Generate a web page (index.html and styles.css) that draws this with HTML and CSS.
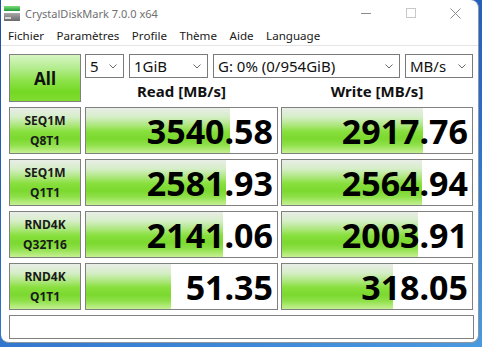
FILE: index.html
```html
<!DOCTYPE html>
<html lang="fr">
<head>
<meta charset="utf-8">
<title>CrystalDiskMark 7.0.0 x64</title>
<link rel="stylesheet" href="styles.css">
</head>
<body>
<div class="window">
  <div class="titlebar">
    <svg class="app-icon" width="16" height="15" viewBox="0 0 16 15">
      <defs>
        <linearGradient id="gtop" x1="0" y1="0" x2="0" y2="1">
          <stop offset="0" stop-color="#7fe07a"/>
          <stop offset="1" stop-color="#1f9a3a"/>
        </linearGradient>
        <linearGradient id="gbody" x1="0" y1="0" x2="0" y2="1">
          <stop offset="0" stop-color="#a8a8a8"/>
          <stop offset="1" stop-color="#6a6a6a"/>
        </linearGradient>
      </defs>
      <rect x="0" y="0" width="16" height="5" fill="url(#gtop)"/>
      <rect x="0" y="7" width="16" height="8" fill="url(#gbody)"/>
      <rect x="1" y="11" width="6" height="2" fill="#d8d8d8"/>
    </svg>
    <span class="title">CrystalDiskMark 7.0.0 x64</span>
    <div class="controls">
      <span class="ctl"><svg width="10" height="10" viewBox="0 0 10 10"><line x1="0" y1="5.5" x2="10" y2="5.5" stroke="#8c8c8c" stroke-width="1"/></svg></span>
      <span class="ctl"><svg width="10" height="10" viewBox="0 0 10 10"><rect x="0.5" y="0.5" width="9" height="9" fill="none" stroke="#c8c8c8" stroke-width="1"/></svg></span>
      <span class="ctl"><svg width="11" height="11" viewBox="0 0 11 11"><path d="M0.5 0.5 L10.5 10.5 M10.5 0.5 L0.5 10.5" stroke="#8c8c8c" stroke-width="1"/></svg></span>
    </div>
  </div>
  <div class="menubar">
    <span class="menu-item">Fichier</span>
    <span class="menu-item">Paramètres</span>
    <span class="menu-item">Profile</span>
    <span class="menu-item">Thème</span>
    <span class="menu-item">Aide</span>
    <span class="menu-item">Language</span>
  </div>
  <div class="client">
    <div class="top">
      <div class="all-btn">All</div>
      <div class="combos">
        <div class="combo combo-count"><span>5</span><svg class="chev" width="8" height="5" viewBox="0 0 8 5"><path d="M0.5 0.5 L4 4 L7.5 0.5" fill="none" stroke="#6a6a6a" stroke-width="1"/></svg></div>
        <div class="combo combo-size"><span>1GiB</span><svg class="chev" width="8" height="5" viewBox="0 0 8 5"><path d="M0.5 0.5 L4 4 L7.5 0.5" fill="none" stroke="#6a6a6a" stroke-width="1"/></svg></div>
        <div class="combo combo-drive"><span>G: 0% (0/954GiB)</span><svg class="chev" width="8" height="5" viewBox="0 0 8 5"><path d="M0.5 0.5 L4 4 L7.5 0.5" fill="none" stroke="#6a6a6a" stroke-width="1"/></svg></div>
        <div class="combo combo-unit"><span>MB/s</span><svg class="chev" width="8" height="5" viewBox="0 0 8 5"><path d="M0.5 0.5 L4 4 L7.5 0.5" fill="none" stroke="#6a6a6a" stroke-width="1"/></svg></div>
      </div>
      <div class="head">Read [MB/s]</div>
      <div class="head">Write [MB/s]</div>
    </div>
    <div class="results">
      <div class="label"><span>SEQ1M</span><span>Q8T1</span></div>
      <div class="val"><div class="bar" style="width:75.4%"></div><div class="num">3540.58</div></div>
      <div class="val"><div class="bar" style="width:74.2%"></div><div class="num">2917.76</div></div>

      <div class="label"><span>SEQ1M</span><span>Q1T1</span></div>
      <div class="val"><div class="bar" style="width:73.3%"></div><div class="num">2581.93</div></div>
      <div class="val"><div class="bar" style="width:73.7%"></div><div class="num">2564.94</div></div>

      <div class="label"><span>RND4K</span><span>Q32T16</span></div>
      <div class="val"><div class="bar" style="width:71.7%"></div><div class="num">2141.06</div></div>
      <div class="val"><div class="bar" style="width:71.6%"></div><div class="num">2003.91</div></div>

      <div class="label"><span>RND4K</span><span>Q1T1</span></div>
      <div class="val"><div class="bar" style="width:44.5%"></div><div class="num">51.35</div></div>
      <div class="val"><div class="bar" style="width:58.4%"></div><div class="num">318.05</div></div>
    </div>
    <div class="comment"></div>
  </div>
</div>
</body>
</html>
```

FILE: styles.css
```css
html, body {
  margin: 0;
  padding: 0;
}

body {
  width: 482px;
  height: 347px;
  overflow: hidden;
  background: linear-gradient(160deg, #1b4ea6 0%, #2a6cc8 55%, #4a9ae0 100%);
  font-family: "Noto Sans", "Open Sans", sans-serif;
  color: #1a1a1a;
}

.window {
  box-sizing: border-box;
  margin-left: 1px;
  width: 478px;
  height: 343px;
  background: #ffffff;
  border-radius: 0 8px 8px 8px;
  border-right: 1px solid #8d96a3;
  border-bottom: 1px solid #8d96a3;
  overflow: hidden;
  display: flex;
  flex-direction: column;
}

.titlebar {
  height: 26px;
  display: flex;
  align-items: center;
  padding-left: 3px;
  flex: none;
}

.app-icon {
  display: block;
  margin-top: 1px;
}

.title {
  margin-left: 5px;
  font-size: 11px;
  color: #707070;
  white-space: nowrap;
}

.controls {
  margin-left: auto;
  display: flex;
  height: 26px;
}

.ctl {
  width: 45px;
  height: 26px;
  display: flex;
  align-items: center;
  justify-content: center;
}

.ctl svg {
  display: block;
}

.menubar {
  height: 19px;
  display: flex;
  align-items: center;
  padding-left: 7px;
  border-bottom: 1px solid #e4e4e4;
  font-size: 11.6px;
  line-height: 19px;
  flex: none;
  color: #1a1a1a;
}

.menu-item {
  margin-right: 12.5px;
  white-space: nowrap;
}

.client {
  padding: 8px 0 0 8px;
}

.top {
  display: grid;
  grid-template-columns: 73px 193px 192px;
  grid-template-rows: 24px 24px;
  column-gap: 3px;
}

.all-btn {
  grid-row: 1 / 3;
  grid-column: 1;
  box-sizing: border-box;
  width: 72px;
  height: 48px;
  border: 1px solid #808080;
  background: linear-gradient(to bottom, #d6f5c4 0%, #b2ec8c 30%, #8ee24c 55%, #74d822 80%, #80dc30 100%);
  display: flex;
  align-items: center;
  justify-content: center;
  font-weight: 700;
  font-size: 17px;
  color: #111;
}

.combos {
  grid-row: 1;
  grid-column: 2 / 4;
  display: flex;
  gap: 5px;
}

.combo {
  box-sizing: border-box;
  height: 24px;
  border: 1px solid #7a7a7a;
  background: #fff;
  display: flex;
  align-items: center;
  padding: 0 6px 0 4px;
  font-size: 15px;
  color: #111;
  white-space: nowrap;
}

.combo span {
  flex: 1;
  line-height: 22px;
}

.chev {
  display: block;
  flex: none;
}

.combo-count { width: 39px; }
.combo-size { width: 79px; }
.combo-drive { width: 187px; }
.combo-unit { width: 68px; }

.head {
  grid-row: 2;
  text-align: center;
  font-weight: 700;
  font-size: 15px;
  line-height: 20px;
  padding-top: 3px;
  color: #111;
}

.results {
  margin-top: 5px;
  display: grid;
  grid-template-columns: 73px 193px 192px;
  grid-auto-rows: 47px;
  column-gap: 3px;
  row-gap: 5px;
}

.label {
  box-sizing: border-box;
  width: 72px;
  border: 1px solid #808080;
  background: linear-gradient(to bottom, #e9ede7 0%, #d6eec8 20%, #a9e676 40%, #88df3d 52%, #7bd92f 68%, #8fe04a 82%, #c6f193 100%);
  display: flex;
  flex-direction: column;
  align-items: center;
  justify-content: center;
  font-weight: 700;
  font-size: 12px;
  line-height: 20px;
  color: #1a1a1a;
}

.val {
  box-sizing: border-box;
  border: 1px solid #808080;
  background: #fff;
  display: grid;
  grid-template-columns: 100%;
  grid-template-rows: 100%;
}

.bar {
  grid-area: 1 / 1;
  height: 100%;
  background: linear-gradient(to bottom, #e9ede7 0%, #d6eec8 20%, #a9e676 40%, #88df3d 52%, #7bd92f 68%, #8fe04a 82%, #c6f193 100%);
}

.num {
  grid-area: 1 / 1;
  justify-self: end;
  align-self: center;
  padding-right: 4px;
  font-weight: 700;
  font-size: 34px;
  line-height: 1;
  color: #000;
  position: relative;
}

.comment {
  box-sizing: border-box;
  margin-top: 5px;
  width: 465px;
  height: 24px;
  border: 1px solid #808080;
  background: #fff;
}
```
